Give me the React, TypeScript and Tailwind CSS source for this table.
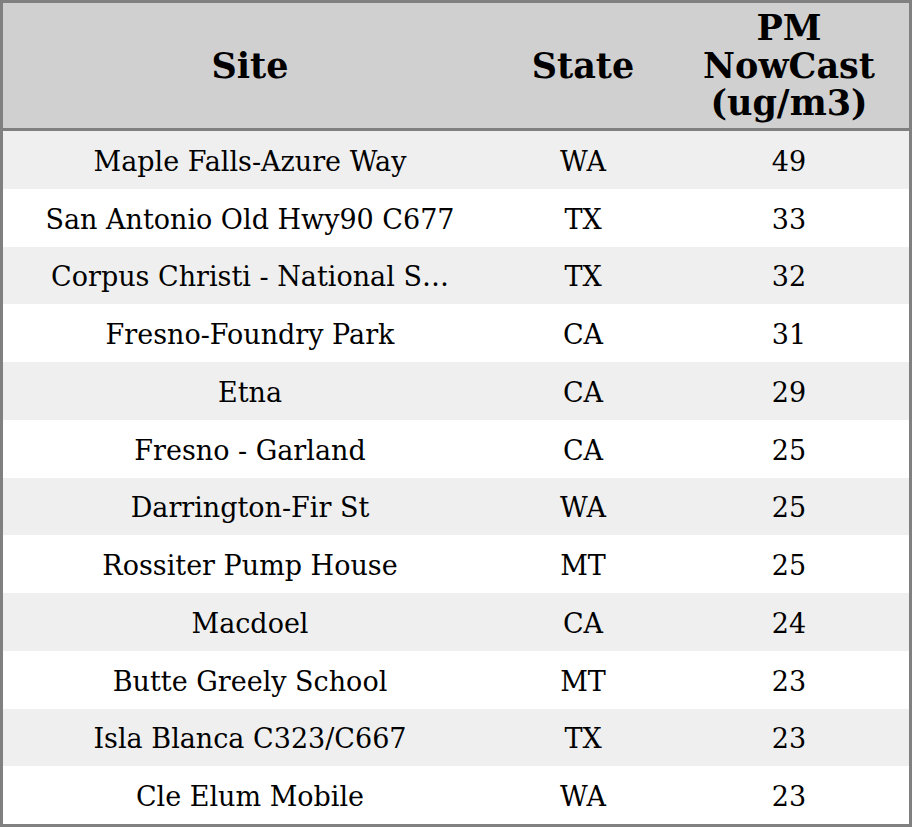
import React from "react";

const rows: [string, string, string][] = [
  ["Maple Falls-Azure Way", "WA", "49"],
  ["San Antonio Old Hwy90 C677", "TX", "33"],
  ["Corpus Christi - National S…", "TX", "32"],
  ["Fresno-Foundry Park", "CA", "31"],
  ["Etna", "CA", "29"],
  ["Fresno - Garland", "CA", "25"],
  ["Darrington-Fir St", "WA", "25"],
  ["Rossiter Pump House", "MT", "25"],
  ["Macdoel", "CA", "24"],
  ["Butte Greely School", "MT", "23"],
  ["Isla Blanca C323/C667", "TX", "23"],
  ["Cle Elum Mobile", "WA", "23"],
];

export default function App() {
  return (
    <div
      className="w-[912px] h-[827px] border-[3px] border-[#808080] bg-white flex flex-col text-black"
      style={{ fontFamily: '"DejaVu Serif", serif' }}
    >
      <div className="h-[125px] bg-[#d0d0d0] grid grid-cols-[494px_172px_240px] items-center text-center font-bold text-[35px] leading-[37.5px]">
        <div>Site</div>
        <div>State</div>
        <div>
          PM
          <br />
          NowCast
          <br />
          (ug/m3)
        </div>
      </div>
      <div className="h-[3px] bg-[#808080]" />
      <div className="flex-1 grid grid-rows-12">
        {rows.map((r, i) => (
          <div
            key={i}
            className={`grid grid-cols-[494px_172px_240px] items-center text-center text-[27px] leading-none pt-[3px] ${
              i % 2 === 0 ? "bg-[#efefef]" : "bg-white"
            }`}
          >
            <div className="whitespace-nowrap">{r[0]}</div>
            <div>{r[1]}</div>
            <div>{r[2]}</div>
          </div>
        ))}
      </div>
    </div>
  );
}
